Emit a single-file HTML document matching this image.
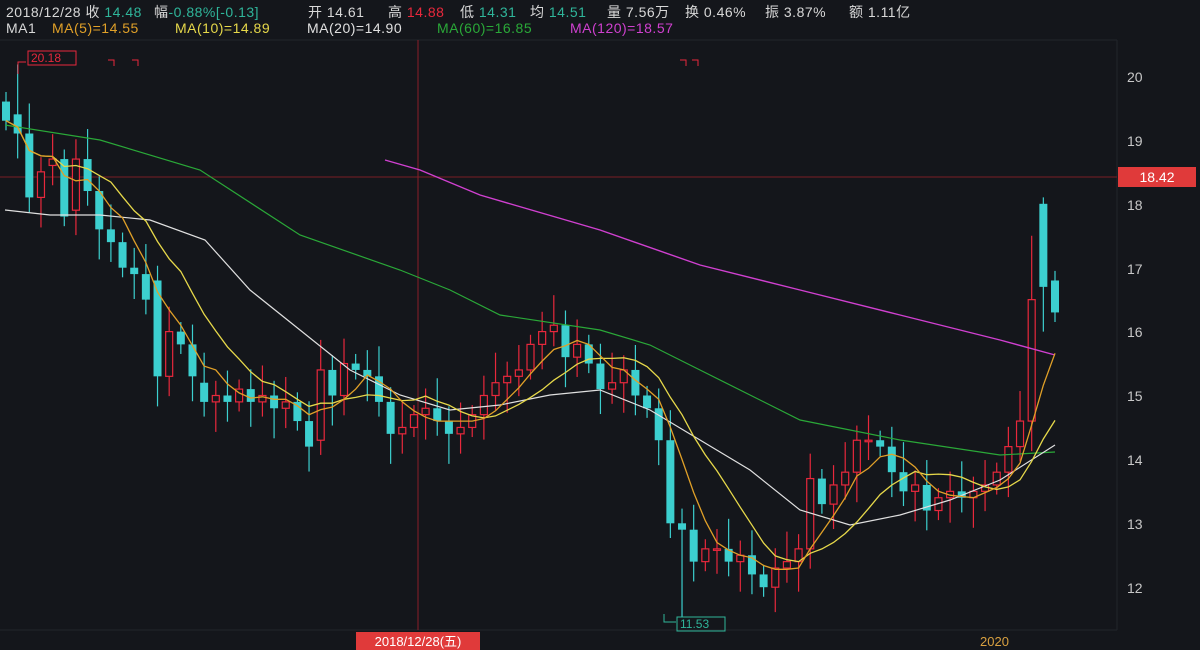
<!DOCTYPE html>
<html><head><meta charset="utf-8"><style>
body{margin:0;background:#14161b;width:1200px;height:650px;overflow:hidden;font-family:"Liberation Sans","Noto Sans CJK SC",sans-serif;}
.t{position:absolute;font-size:14px;white-space:pre;color:#d8d8d8;letter-spacing:0.5px}
.g{color:#2fb59a}.r{color:#e8283c}
</style></head><body>
<div class="t" style="left:6px;top:2px">2018/12/28 收 <span class="g">14.48</span></div>
<div class="t" style="left:154px;top:2px">幅<span class="g">-0.88%[-0.13]</span></div>
<div class="t" style="left:308px;top:2px">开 14.61</div>
<div class="t" style="left:388px;top:2px">高 <span class="r">14.88</span></div>
<div class="t" style="left:460px;top:2px">低 <span class="g">14.31</span></div>
<div class="t" style="left:530px;top:2px">均 <span class="g">14.51</span></div>
<div class="t" style="left:607px;top:2px">量 7.56万</div>
<div class="t" style="left:685px;top:2px">换 0.46%</div>
<div class="t" style="left:765px;top:2px">振 3.87%</div>
<div class="t" style="left:849px;top:2px">额 1.11亿</div>
<div class="t" style="left:6px;top:20px">MA1</div>
<div class="t" style="left:52px;top:20px;color:#e0a028">MA(5)=14.55</div>
<div class="t" style="left:175px;top:20px;color:#e6d84a">MA(10)=14.89</div>
<div class="t" style="left:307px;top:20px;color:#e0e0e0">MA(20)=14.90</div>
<div class="t" style="left:437px;top:20px;color:#2aa838">MA(60)=16.85</div>
<div class="t" style="left:570px;top:20px;color:#d040d0">MA(120)=18.57</div>
<svg id="s" width="1200" height="650" style="position:absolute;left:0;top:0" xmlns="http://www.w3.org/2000/svg">
<g stroke="#22252b" stroke-width="1">
<line x1="0" y1="40" x2="1117" y2="40"/><line x1="1117" y1="40" x2="1117" y2="630"/><line x1="0" y1="630" x2="1117" y2="630"/>
</g>
<line x1="0" y1="177" x2="1117" y2="177" stroke="#7a1e26" stroke-width="1"/>
<line x1="418" y1="40" x2="418" y2="630" stroke="#8a1e2a" stroke-width="1"/>
<g fill="#c8c8c8" font-size="14"><text x="1127" y="82">20</text><text x="1127" y="146">19</text><text x="1127" y="210">18</text><text x="1127" y="274">17</text><text x="1127" y="337">16</text><text x="1127" y="401">15</text><text x="1127" y="465">14</text><text x="1127" y="529">13</text><text x="1127" y="593">12</text></g>
<rect x="1118" y="167" width="78" height="20" fill="#e03a3a"/><text x="1157" y="182" fill="#fff" font-size="14" text-anchor="middle">18.42</text>
<rect x="356" y="632" width="124" height="18" fill="#e03a3a"/><text x="418" y="646" fill="#fff" font-size="13" text-anchor="middle">2018/12/28(五)</text>
<text x="980" y="646" fill="#d8a040" font-size="13">2020</text>
<g id="c"></g>
<polyline fill="none" stroke="#2aa838" stroke-width="1.2" points="5,125 100,140 200,170 300,235 400,270 450,290 500,315 600,330 650,345 700,370 800,420 900,440 1000,455 1055,452"/>
<polyline fill="none" stroke="#d040d0" stroke-width="1.4" points="385,160 420,170 480,195 600,230 700,265 800,290 900,315 1000,340 1055,355"/>
<polyline fill="none" stroke="#e0e0e0" stroke-width="1.2" points="5,210 50,215 100,215 150,220 205,240 250,290 300,330 350,370 400,395 450,410 500,405 550,395 600,390 650,410 700,440 750,470 800,510 850,525 900,515 950,500 1000,480 1055,445"/>
<g id="m"></g>
<path d="M18 74 V62 H26" fill="none" stroke="#e8283c"/><rect x="28" y="51" width="48" height="14" fill="none" stroke="#e8283c"/><text x="31" y="62" fill="#e8283c" font-size="12">20.18</text>
<path d="M108 60 H114 V66 M132 60 H138 V66 M680 60 H686 V66 M692 60 H698 V66" fill="none" stroke="#e8283c"/>
<path d="M664 614 V622 H676" fill="none" stroke="#2fb59a"/><rect x="677" y="617" width="48" height="14" fill="none" stroke="#2fb59a"/><text x="680" y="628" fill="#2fb59a" font-size="12">11.53</text>
</svg>
<script>
var C=[19.3,19.1,18.1,18.5,18.7,17.8,18.7,18.2,17.6,17.4,17.0,16.9,16.5,15.3,16.0,15.8,15.3,14.9,15.0,14.9,15.1,14.9,15.0,14.8,14.9,14.6,14.2,15.4,15.0,15.5,15.4,15.3,14.9,14.4,14.5,14.7,14.8,14.6,14.4,14.5,14.7,15.0,15.2,15.3,15.4,15.8,16.0,16.1,15.6,15.8,15.5,15.1,15.2,15.4,15.0,14.8,14.3,13.0,12.9,12.4,12.6,12.6,12.4,12.5,12.2,12.0,12.3,12.4,12.6,13.7,13.3,13.6,13.8,14.3,14.3,14.2,13.8,13.5,13.6,13.2,13.4,13.5,13.4,13.5,13.6,13.8,14.2,14.6,16.5,16.7,16.3];
var O=[19.6,19.4,19.1,18.1,18.6,18.7,17.9,18.7,18.2,17.6,17.4,17.0,16.9,16.8,15.3,16.0,15.8,15.2,14.9,15.0,14.9,15.1,14.9,15.0,14.8,14.9,14.6,14.3,15.4,15.0,15.5,15.4,15.3,14.9,14.4,14.5,14.7,14.8,14.6,14.4,14.5,14.7,15.0,15.2,15.3,15.4,15.8,16.0,16.1,15.6,15.8,15.5,15.1,15.2,15.4,15.0,14.8,14.3,13.0,12.9,12.4,12.6,12.6,12.4,12.5,12.2,12.0,12.3,12.4,12.6,13.7,13.3,13.6,13.8,14.3,14.3,14.2,13.8,13.5,13.6,13.2,13.4,13.5,13.4,13.5,13.6,13.8,14.2,14.6,18.0,16.8];
function Y(p){return 76+(20-p)*63.9}
var n=C.length,s="",sp=(1055-6)/(n-1);
for(var i=0;i<n;i++){var x=6+i*sp,o=O[i],c=C[i],up=c>=o,col=up?"#e8283c":"#3ccfcf";
var h=Math.max(o,c)+0.15+((i*7)%5)*0.08,l=Math.min(o,c)-0.15-((i*3)%5)*0.08;
if(i==1)h=20.18;if(i==58)l=11.53;if(i==n-3)h=17.5;if(i==n-2){h=18.1;l=16.0}
s+='<line x1="'+x+'" y1="'+Y(h)+'" x2="'+x+'" y2="'+Y(l)+'" stroke="'+col+'" stroke-width="1.2"/>';
var t=Y(Math.max(o,c)),b=Y(Math.min(o,c));if(b-t<1.5)b=t+1.5;
s+=up?'<rect x="'+(x-3.5)+'" y="'+t+'" width="7" height="'+(b-t)+'" fill="#14161b" stroke="'+col+'" stroke-width="1.2"/>':'<rect x="'+(x-4)+'" y="'+t+'" width="8" height="'+(b-t)+'" fill="'+col+'"/>';}
document.getElementById("c").innerHTML=s;
function ma(k,col){var p=[];for(var i=0;i<n;i++){var a=Math.max(0,i-k+1),sm=0;for(var j=a;j<=i;j++)sm+=C[j];p.push((6+i*sp).toFixed(1)+","+Y(sm/(i-a+1)).toFixed(1));}return '<polyline fill="none" stroke="'+col+'" stroke-width="1.3" points="'+p.join(" ")+'"/>';}
document.getElementById("m").innerHTML=ma(10,"#e6d84a")+ma(5,"#e0a028");
</script>
</body></html>
